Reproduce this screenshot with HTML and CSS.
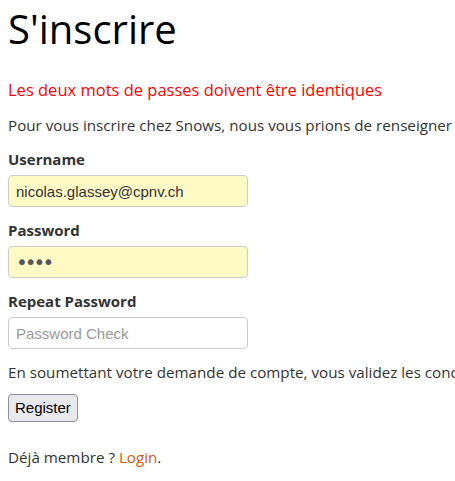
FILE: index.html
```html
<!DOCTYPE html>
<html lang="fr">
<head>
<meta charset="utf-8">
<title>S'inscrire</title>
<link rel="stylesheet" href="styles.css">
</head>
<body>
<main class="page">
  <h1 class="title">S'inscrire</h1>
  <p class="error">Les deux mots de passes doivent être identiques</p>
  <p class="intro">Pour vous inscrire chez Snows, nous vous prions de renseigner les champs suivants.</p>
  <form class="form">
    <div class="field">
      <label class="label" for="user">Username</label>
      <input class="input filled" id="user" type="text" value="nicolas.glassey@cpnv.ch">
    </div>
    <div class="field">
      <label class="label" for="pwd">Password</label>
      <input class="input filled secret" id="pwd" type="password" value="abcd">
    </div>
    <div class="field">
      <label class="label" for="pwd2">Repeat Password</label>
      <input class="input" id="pwd2" type="password" placeholder="Password Check">
    </div>
    <p class="terms">En soumettant votre demande de compte, vous validez les conditions générales d'utilisation.</p>
    <button class="btn" type="button">Register</button>
  </form>
  <p class="member">Déjà membre ? <a class="link" href="#">Login</a>.</p>
</main>
</body>
</html>
```

FILE: styles.css
```css
html, body {
  margin: 0;
  padding: 0;
  overflow: hidden;
}
body {
  font-family: "Open Sans", sans-serif;
  font-size: 15.2px;
  color: #333;
  background: #fff;
}
.page {
  padding: 5px 8px 0;
  display: flex;
  flex-direction: column;
}
.title {
  margin: 0;
  font-size: 40px;
  font-weight: 400;
  line-height: 48px;
  color: #000;
}
.error {
  margin: 26px 0 0;
  font-size: 16.5px;
  line-height: 22px;
  color: #f00;
  white-space: nowrap;
}
.intro, .terms {
  margin: 13px 0 0;
  line-height: 22px;
  white-space: nowrap;
}
.form {
  display: flex;
  flex-direction: column;
  align-items: flex-start;
  margin-top: 13px;
}
.field {
  display: flex;
  flex-direction: column;
  margin-bottom: 13px;
}
.label {
  font-size: 15px;
  font-weight: 700;
  line-height: 20px;
  margin-bottom: 6px;
}
.input {
  box-sizing: border-box;
  width: 240px;
  height: 32px;
  margin: 0;
  padding: 6px 7px;
  font-family: "Liberation Sans", Arial, sans-serif;
  font-size: 15px;
  color: #555;
  border: 1px solid #ccc;
  border-radius: 4px;
  background: #fff;
}
.input.filled {
  background: #fffac6;
  color: #333;
}
.input.secret {
  font-family: "DejaVu Sans", sans-serif;
  font-size: 20px;
  letter-spacing: -3px;
  padding: 3px 7px;
  color: #555;
}
.input::placeholder {
  color: #999;
}
.terms {
  margin-top: -1px;
}
.btn {
  margin-top: 11px;
  font-family: "Liberation Sans", Arial, sans-serif;
  font-size: 15px;
  line-height: 18px;
  padding: 4px 6px;
  color: #000;
  background: #e9e9ed;
  border: 1px solid #8f8f9d;
  border-radius: 4px;
}
.member {
  margin: 24px 0 0;
  line-height: 22px;
}
.link {
  color: #dc5a0b;
  text-decoration: none;
}
```
